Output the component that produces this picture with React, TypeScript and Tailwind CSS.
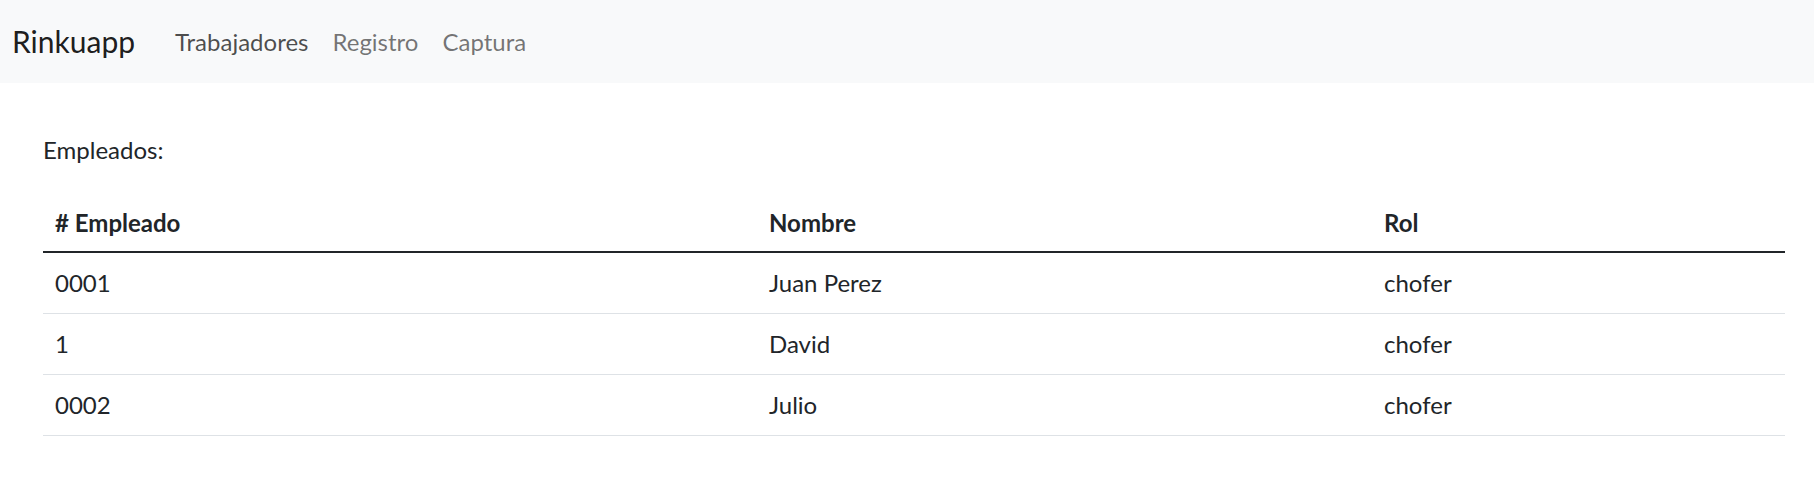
type Employee = {
  id: string
  name: string
  role: string
}

const employees: Employee[] = [
  { id: '0001', name: 'Juan Perez', role: 'chofer' },
  { id: '1', name: 'David', role: 'chofer' },
  { id: '0002', name: 'Julio', role: 'chofer' },
]

function Navbar() {
  return (
    <nav className="flex h-[83px] items-center bg-[#f8f9fa] pl-[12px]">
      <a href="#" className="mr-[28px] text-[30px] leading-[45px] text-black/90">
        Rinkuapp
      </a>
      <ul className="flex items-center text-[24px] leading-[36px]">
        <li>
          <a href="#" className="block px-[12px] text-black/70">
            Trabajadores
          </a>
        </li>
        <li>
          <a href="#" className="block px-[12px] text-black/55">
            Registro
          </a>
        </li>
        <li>
          <a href="#" className="block px-[12px] text-black/55">
            Captura
          </a>
        </li>
      </ul>
    </nav>
  )
}

export default function App() {
  return (
    <div className="min-h-[490px] bg-white font-['Lato',sans-serif] text-[#212529]">
      <Navbar />
      <main className="pt-[49px] pl-[43px] pr-[29px]">
        <p className="mb-[23px] text-[24px] leading-[36px]">Empleados:</p>
        <table className="w-full border-collapse text-left text-[24px] leading-[36px]">
          <thead>
            <tr className="border-b-2 border-[#212529]">
              <th className="w-[714px] px-[12px] pt-[14px] pb-[10px] font-bold"># Empleado</th>
              <th className="w-[615px] px-[12px] pt-[14px] pb-[10px] font-bold">Nombre</th>
              <th className="px-[12px] pt-[14px] pb-[10px] font-bold">Rol</th>
            </tr>
          </thead>
          <tbody>
            {employees.map((e) => (
              <tr key={e.id} className="border-b border-[#dee2e6]">
                <td className="px-[12px] py-[12px]">{e.id}</td>
                <td className="px-[12px] py-[12px]">{e.name}</td>
                <td className="px-[12px] py-[12px]">{e.role}</td>
              </tr>
            ))}
          </tbody>
        </table>
      </main>
    </div>
  )
}
